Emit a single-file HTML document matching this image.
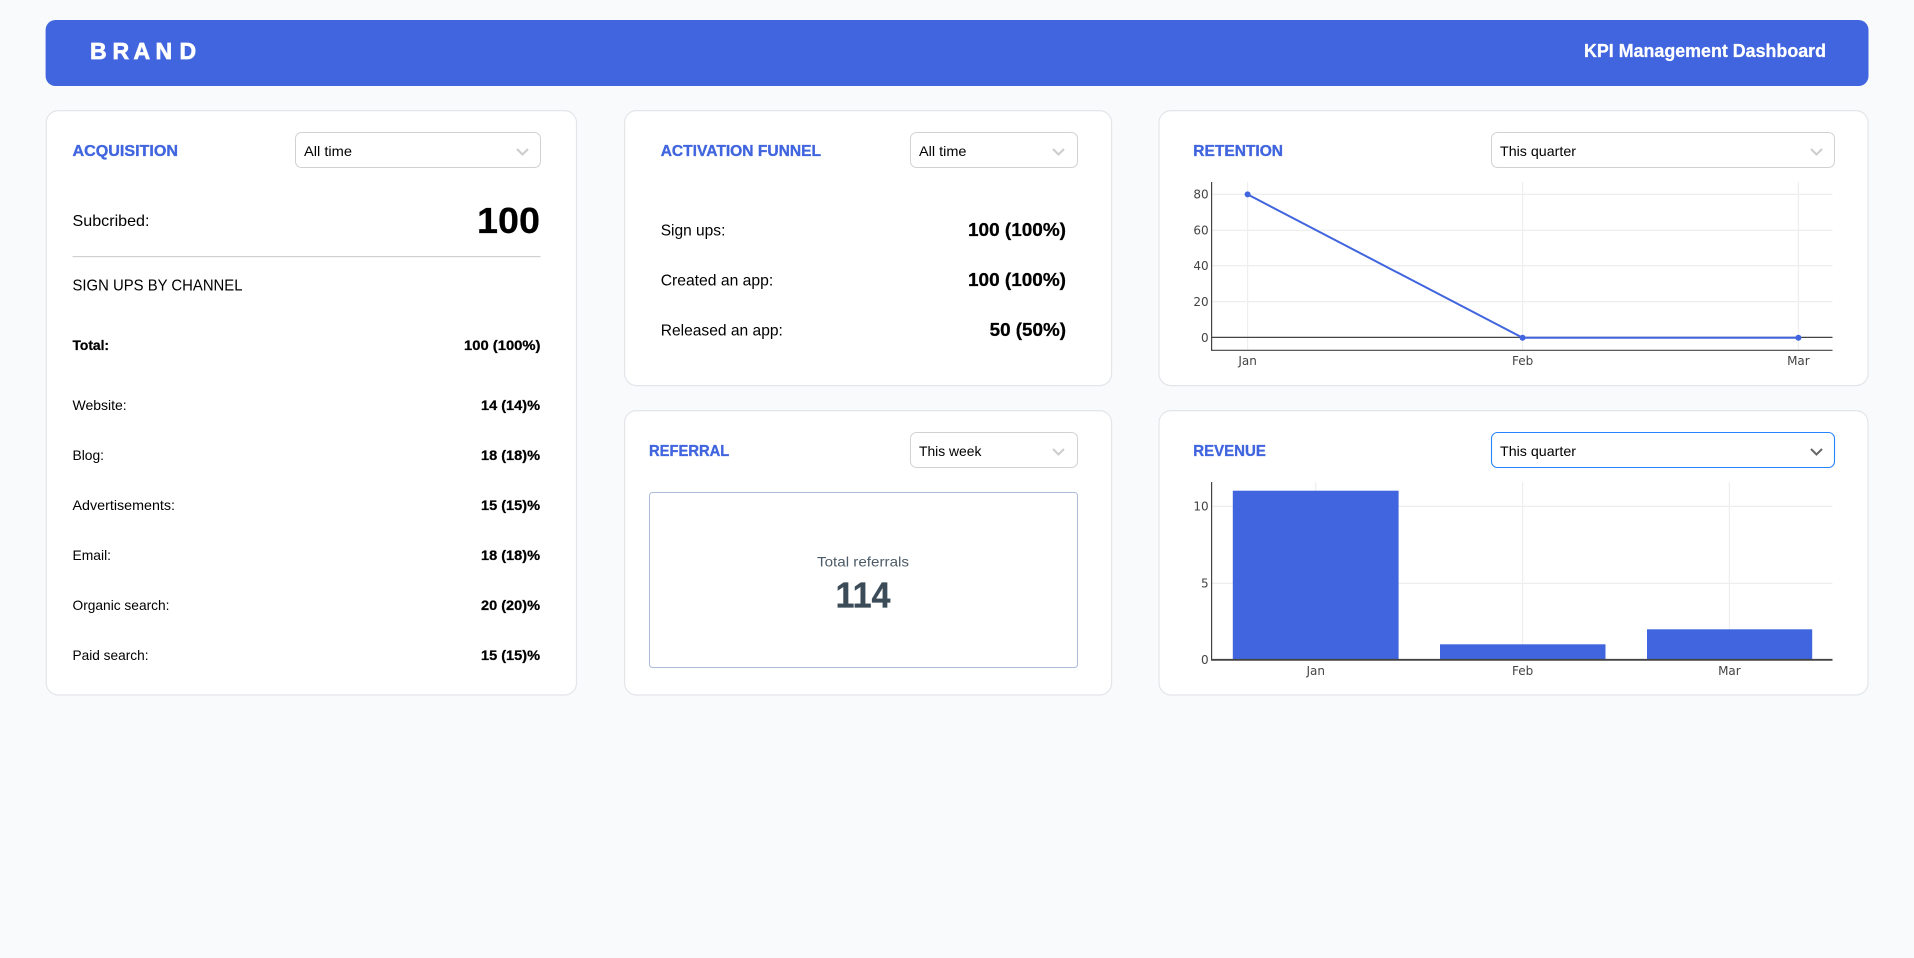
<!DOCTYPE html>
<html lang="en">
<head>
<meta charset="utf-8">
<title>KPI Management Dashboard</title>
<style>
html,body{margin:0;padding:0;background:#f9fafc;width:1914px;height:958px;overflow:hidden}
svg{display:block}
text{font-family:"Liberation Sans",sans-serif;fill:#000}
.b{font-weight:700;stroke:#000;stroke-width:.25}
.t{font-weight:700;font-size:16px;fill:#4065de;stroke:#4065de;stroke-width:.35}
.s{font-size:14px}
.c{font-family:"DejaVu Sans",sans-serif;font-size:12px;fill:#444}
.card{fill:#fff;stroke:#e3e5e9;stroke-width:1.2}
.sel{fill:#fff;stroke:#d2d2d2;stroke-width:1}
.chev{fill:none;stroke:#cccccc;stroke-width:2}
.grid{stroke:#eeeeee;stroke-width:1.2}
.axis{stroke:#444;stroke-width:1.2}
.bar{fill:#4065de}
</style>
</head>
<body>
<svg width="1914" height="958" viewBox="0 0 1914 958" xmlns="http://www.w3.org/2000/svg">
<rect width="1914" height="958" fill="#f9fafc"/>

<!-- Header -->
<rect x="45.6" y="20" width="1822.9" height="66" rx="10" fill="#4065de"/>
<text x="90 112.5 133.5 155.5 179.5" y="59" font-weight="700" font-size="23" style="fill:#fff;stroke:#fff;stroke-width:.7">BRAND</text>
<text x="1584" y="57" font-weight="700" font-size="18" style="fill:#fff;stroke:#fff;stroke-width:.25" textLength="242" lengthAdjust="spacingAndGlyphs">KPI Management Dashboard</text>

<!-- Acquisition -->
<rect class="card" x="46.3" y="110.6" width="530.2" height="584.4" rx="12"/>
<text x="72.5" y="156" class="t" textLength="105.5" lengthAdjust="spacingAndGlyphs">ACQUISITION</text>
<rect class="sel" x="295.5" y="132.5" width="245" height="35" rx="6"/>
<text x="304" y="156" class="s" textLength="48" lengthAdjust="spacingAndGlyphs">All time</text>
<path class="chev" d="M517 149l5.5 5.5 5.5-5.5"/>
<text x="72.5" y="226.2" font-size="16" textLength="77" lengthAdjust="spacingAndGlyphs">Subcribed:</text>
<text x="477" y="233" class="b" font-size="36" textLength="63" lengthAdjust="spacingAndGlyphs">100</text>
<rect x="72.5" y="256" width="468" height="1.2" fill="#d0d0d0"/>
<text x="72.5" y="290.6" font-size="16" textLength="170" lengthAdjust="spacingAndGlyphs">SIGN UPS BY CHANNEL</text>
<text x="72.5" y="350" class="s b" textLength="36.5" lengthAdjust="spacingAndGlyphs">Total:</text>
<text x="464" y="350" class="s b" textLength="76.5" lengthAdjust="spacingAndGlyphs">100 (100%)</text>
<text x="72.5" y="410" class="s" textLength="54.2" lengthAdjust="spacingAndGlyphs">Website:</text>
<text x="481" y="410" class="s b" textLength="59" lengthAdjust="spacingAndGlyphs">14 (14)%</text>
<text x="72.5" y="460" class="s" textLength="31.5" lengthAdjust="spacingAndGlyphs">Blog:</text>
<text x="481" y="460" class="s b" textLength="59" lengthAdjust="spacingAndGlyphs">18 (18)%</text>
<text x="72.5" y="510" class="s" textLength="102.5" lengthAdjust="spacingAndGlyphs">Advertisements:</text>
<text x="481" y="510" class="s b" textLength="59" lengthAdjust="spacingAndGlyphs">15 (15)%</text>
<text x="72.5" y="560" class="s" textLength="38.5" lengthAdjust="spacingAndGlyphs">Email:</text>
<text x="481" y="560" class="s b" textLength="59" lengthAdjust="spacingAndGlyphs">18 (18)%</text>
<text x="72.5" y="610" class="s" textLength="97" lengthAdjust="spacingAndGlyphs">Organic search:</text>
<text x="481" y="610" class="s b" textLength="59" lengthAdjust="spacingAndGlyphs">20 (20)%</text>
<text x="72.5" y="660" class="s" textLength="76" lengthAdjust="spacingAndGlyphs">Paid search:</text>
<text x="481" y="660" class="s b" textLength="59" lengthAdjust="spacingAndGlyphs">15 (15)%</text>

<!-- Activation funnel -->
<rect class="card" x="624.6" y="110.6" width="487" height="275" rx="12"/>
<text x="660.7" y="156" class="t" textLength="160.3" lengthAdjust="spacingAndGlyphs">ACTIVATION FUNNEL</text>
<rect class="sel" x="910.5" y="132.5" width="167" height="35" rx="6"/>
<text x="919" y="156" class="s" textLength="47.5" lengthAdjust="spacingAndGlyphs">All time</text>
<path class="chev" d="M1053 149l5.5 5.5 5.5-5.5"/>
<text x="660.7" y="235.7" font-size="16" textLength="64.7" lengthAdjust="spacingAndGlyphs">Sign ups:</text>
<text x="968" y="236" class="b" font-size="18" textLength="98" lengthAdjust="spacingAndGlyphs">100 (100%)</text>
<text x="660.7" y="285.7" font-size="16" textLength="112.5" lengthAdjust="spacingAndGlyphs">Created an app:</text>
<text x="968" y="286" class="b" font-size="18" textLength="98" lengthAdjust="spacingAndGlyphs">100 (100%)</text>
<text x="660.7" y="335.7" font-size="16" textLength="122.2" lengthAdjust="spacingAndGlyphs">Released an app:</text>
<text x="989.6" y="336" class="b" font-size="18" textLength="76.4" lengthAdjust="spacingAndGlyphs">50 (50%)</text>

<!-- Referral -->
<rect class="card" x="624.6" y="410.6" width="487" height="284.4" rx="12"/>
<text x="649" y="456" class="t" textLength="80.3" lengthAdjust="spacingAndGlyphs">REFERRAL</text>
<rect class="sel" x="910.5" y="432.5" width="167" height="35" rx="6"/>
<text x="919" y="456" class="s" textLength="62.4" lengthAdjust="spacingAndGlyphs">This week</text>
<path class="chev" d="M1053 449l5.5 5.5 5.5-5.5"/>
<rect x="649.5" y="492.5" width="428" height="175" rx="3" fill="#fff" stroke="#adbcd8" stroke-width="1"/>
<text x="817" y="566.6" class="s" style="fill:#4c5b67" textLength="92" lengthAdjust="spacingAndGlyphs">Total referrals</text>
<text x="835.5" y="607.7" font-weight="700" font-size="36" style="fill:#3b4c58;stroke:#3b4c58;stroke-width:.3" textLength="55" lengthAdjust="spacingAndGlyphs">114</text>

<!-- Retention -->
<rect class="card" x="1159" y="110.6" width="709" height="275" rx="12"/>
<text x="1193.3" y="156" class="t" textLength="89.7" lengthAdjust="spacingAndGlyphs">RETENTION</text>
<rect class="sel" x="1491.5" y="132.5" width="343" height="35" rx="6"/>
<text x="1500" y="156" class="s" textLength="76" lengthAdjust="spacingAndGlyphs">This quarter</text>
<path class="chev" d="M1811 149l5.5 5.5 5.5-5.5"/>
<g class="grid">
<line x1="1212" x2="1832.5" y1="194.4" y2="194.4"/>
<line x1="1212" x2="1832.5" y1="230.4" y2="230.4"/>
<line x1="1212" x2="1832.5" y1="265.6" y2="265.6"/>
<line x1="1212" x2="1832.5" y1="301.6" y2="301.6"/>
<line x1="1247.6" x2="1247.6" y1="182" y2="350"/>
<line x1="1522.6" x2="1522.6" y1="182" y2="350"/>
<line x1="1798.4" x2="1798.4" y1="182" y2="350"/>
</g>
<line class="axis" x1="1211.6" x2="1211.6" y1="182" y2="350.6"/>
<line class="axis" x1="1211" x2="1832.5" y1="350.3" y2="350.3"/>
<line class="axis" x1="1211" x2="1832.5" y1="337.4" y2="337.4"/>
<polyline points="1247.6,194.4 1522.6,337.8 1798.4,337.8" fill="none" stroke="#4065de" stroke-width="2"/>
<circle cx="1247.6" cy="194.4" r="3" fill="#4065de"/>
<circle cx="1522.6" cy="337.8" r="3" fill="#4065de"/>
<circle cx="1798.4" cy="337.8" r="3" fill="#4065de"/>
<g text-anchor="end">
<text class="c" x="1208.6" y="198.5">80</text>
<text class="c" x="1208.6" y="234.5">60</text>
<text class="c" x="1208.6" y="270">40</text>
<text class="c" x="1208.6" y="306">20</text>
<text class="c" x="1208.6" y="342">0</text>
</g>
<g text-anchor="middle">
<text class="c" x="1247.6" y="365">Jan</text>
<text class="c" x="1522.6" y="365">Feb</text>
<text class="c" x="1798.4" y="365">Mar</text>
</g>

<!-- Revenue -->
<rect class="card" x="1159" y="410.6" width="709" height="284.4" rx="12"/>
<text x="1193.3" y="456" class="t" textLength="72.6" lengthAdjust="spacingAndGlyphs">REVENUE</text>
<rect x="1491.5" y="432.5" width="343" height="35" rx="6" fill="#fff" stroke="#2684ff" stroke-width="1.1"/>
<text x="1500" y="456" class="s" textLength="76" lengthAdjust="spacingAndGlyphs">This quarter</text>
<path d="M1811 449l5.5 5.5 5.5-5.5" fill="none" stroke="#666" stroke-width="2"/>
<g class="grid">
<line x1="1212" x2="1832.5" y1="506.4" y2="506.4"/>
<line x1="1212" x2="1832.5" y1="583.4" y2="583.4"/>
<line x1="1315.7" x2="1315.7" y1="482" y2="660"/>
<line x1="1522.6" x2="1522.6" y1="482" y2="660"/>
<line x1="1729.4" x2="1729.4" y1="482" y2="660"/>
</g>
<rect class="bar" x="1232.8" y="490.7" width="165.8" height="168.8"/>
<rect class="bar" x="1440" y="644.3" width="165.5" height="15.2"/>
<rect class="bar" x="1647" y="629.3" width="165.2" height="30.2"/>
<line class="axis" x1="1211.6" x2="1211.6" y1="482" y2="660"/>
<line x1="1211" x2="1832.5" y1="659.8" y2="659.8" stroke="#444" stroke-width="1.8"/>
<text class="c" x="1208.6" y="510.7" text-anchor="end">10</text>
<text class="c" x="1208.6" y="587.7" text-anchor="end">5</text>
<text class="c" x="1208.6" y="664" text-anchor="end">0</text>
<g text-anchor="middle">
<text class="c" x="1315.7" y="675">Jan</text>
<text class="c" x="1522.6" y="675">Feb</text>
<text class="c" x="1729.4" y="675">Mar</text>
</g>
</svg>
</body>
</html>
